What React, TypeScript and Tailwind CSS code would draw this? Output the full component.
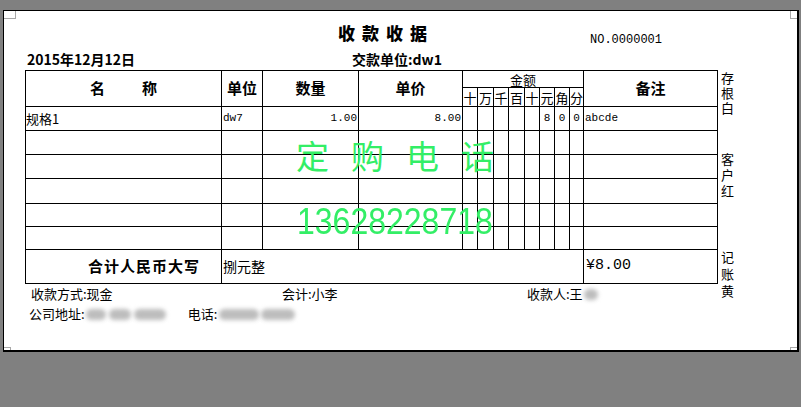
import React from "react";

const cjk = "font-['Noto_Sans_CJK_SC',sans-serif]";
const mono = "font-['Liberation_Mono','Noto_Sans_CJK_SC',monospace]";

const moneyHeads = ["十", "万", "千", "百", "十", "元", "角", "分"];

const rows = [
  { name: "规格1", unit: "dw7", qty: "1.00", price: "8.00", money: ["", "", "", "", "", "8", "0", "0"], note: "abcde" },
  { name: "", unit: "", qty: "", price: "", money: ["", "", "", "", "", "", "", ""], note: "" },
  { name: "", unit: "", qty: "", price: "", money: ["", "", "", "", "", "", "", ""], note: "" },
  { name: "", unit: "", qty: "", price: "", money: ["", "", "", "", "", "", "", ""], note: "" },
  { name: "", unit: "", qty: "", price: "", money: ["", "", "", "", "", "", "", ""], note: "" },
  { name: "", unit: "", qty: "", price: "", money: ["", "", "", "", "", "", "", ""], note: "" },
];

const Blur = ({ w }: { w: string }) => (
  <span className={`inline-block h-[11px] ${w} rounded-full bg-[#bdbdbd] blur-[2px]`} />
);

export default function App() {
  return (
    <div className="h-[407px] w-[801px] overflow-hidden bg-[#808080] pl-[3px] pt-[10px]">
      <div className={`relative h-[342px] w-[796px] border-b-2 border-l border-r-2 border-t border-black bg-white text-black ${cjk}`}>
        {/* corner marks */}
        <div className="absolute left-0 top-0 h-[8px] w-[12px] border-b border-r border-[#a8a8a8]" />
        <div className="absolute right-0 top-0 h-[8px] w-[7px] border-b border-l border-[#a8a8a8]" />
        <div className="absolute bottom-0 left-0 h-[3px] w-[7px] border-r border-t border-[#a8a8a8]" />
        <div className="absolute bottom-0 right-0 h-[3px] w-[7px] border-l border-t border-[#a8a8a8]" />

        {/* title */}
        <div className="mt-[11px] flex h-[22px] items-end">
          <span className="ml-[334px] w-[252px] text-[17px] font-black leading-[22px] tracking-[7px]">收款收据</span>
          <span className={`mb-[-3px] text-[12px] leading-[14px] ${mono}`}>NO.0000001</span>
        </div>

        {/* date / payer */}
        <div className="mt-[7px] flex h-[16px] items-center text-[14px] font-bold leading-[16px]">
          <span className="w-[348px] pl-[23px]">2015年12月12日</span>
          <span>交款单位:dw1</span>
        </div>

        {/* table + side labels */}
        <div className="mt-[3px] flex h-[214px] items-start pl-[21px]">
          <div className="relative">
            <div className="grid grid-cols-[195px_40px_95px_103px_14px_15px_14px_15px_14px_14px_14px_13px_133px] grid-rows-[16px_18px_23px_23px_23px_24px_22px_22px_33px] gap-px border border-black bg-black">
              <div className="row-span-2 flex items-center justify-center gap-[37px] bg-white text-[15px] font-bold">
                <span>名</span>
                <span>称</span>
              </div>
              <div className="row-span-2 flex items-center justify-center bg-white text-[15px] font-bold">单位</div>
              <div className="row-span-2 flex items-center justify-center bg-white text-[15px] font-bold">数量</div>
              <div className="row-span-2 flex items-center justify-center bg-white text-[15px] font-bold">单价</div>
              <div className="col-span-8 flex items-center justify-center bg-white text-[13px] leading-none">金额</div>
              <div className="row-span-2 flex items-center justify-center bg-white text-[15px] font-bold">备注</div>
              {moneyHeads.map((h, i) => (
                <div key={i} className="flex items-center justify-center bg-white text-[13px] leading-none">
                  {h}
                </div>
              ))}

              {rows.map((r, i) => (
                <React.Fragment key={i}>
                  <div className="flex items-center bg-white text-[13px]">{r.name}</div>
                  <div className={`flex items-center bg-white pl-[1px] text-[11px] ${mono}`}>{r.unit}</div>
                  <div className={`flex items-center justify-end bg-white pr-[1px] text-[11px] ${mono}`}>{r.qty}</div>
                  <div className={`flex items-center justify-end bg-white pr-[1px] text-[11px] ${mono}`}>{r.price}</div>
                  {r.money.map((m, j) => (
                    <div key={j} className={`flex items-center justify-center bg-white text-[11px] ${mono}`}>
                      {m}
                    </div>
                  ))}
                  <div className={`flex items-center bg-white pl-[1px] text-[11px] ${mono}`}>{r.note}</div>
                </React.Fragment>
              ))}

              <div className="flex items-center justify-end bg-white pr-[21px] text-[15px] font-bold tracking-[1px]">
                合计人民币大写
              </div>
              <div className="col-span-11 flex items-center bg-white pl-[1px] text-[14px]">捌元整</div>
              <div className={`flex items-center bg-white pl-[2px] text-[15px] ${mono}`}>¥8.00</div>
            </div>

            {/* watermark */}
            <div className="pointer-events-none absolute left-[271px] top-[69px] whitespace-nowrap text-[33px] leading-none tracking-[22px] text-[#33ee66]">
              定购电话
            </div>
            <div className="pointer-events-none absolute left-[272px] top-[133px] origin-top scale-y-[1.15] whitespace-nowrap font-['Liberation_Sans',sans-serif] text-[32px] leading-none text-[#33ee66]">
              13628228718
            </div>
          </div>

          <div className="ml-[3px] flex flex-col text-[13px]">
            <div className="leading-[15px]">
              <div>存</div>
              <div>根</div>
              <div>白</div>
            </div>
            <div className="mt-[36px] leading-[16px]">
              <div>客</div>
              <div>户</div>
              <div>红</div>
            </div>
            <div className="mt-[49px] leading-[17px]">
              <div>记</div>
              <div>账</div>
              <div>黄</div>
            </div>
          </div>
        </div>

        {/* footer */}
        <div className="mt-[2px] flex text-[13px] leading-[16px]">
          <span className="w-[278px] pl-[27px]">收款方式:现金</span>
          <span className="w-[245px]">会计:小李</span>
          <span className="flex items-center gap-[1px]">
            收款人:王
            <Blur w="w-[14px]" />
          </span>
        </div>
        <div className="mt-[4px] flex items-center text-[13px] leading-[16px]">
          <span className="pl-[25px]">公司地址:</span>
          <span className="ml-[1px] flex gap-[3px]">
            <Blur w="w-[20px]" />
            <Blur w="w-[22px]" />
            <Blur w="w-[32px]" />
          </span>
          <span className="ml-[22px]">电话:</span>
          <span className="ml-[2px] flex gap-[2px]">
            <Blur w="w-[40px]" />
            <Blur w="w-[34px]" />
          </span>
        </div>
      </div>
    </div>
  );
}
